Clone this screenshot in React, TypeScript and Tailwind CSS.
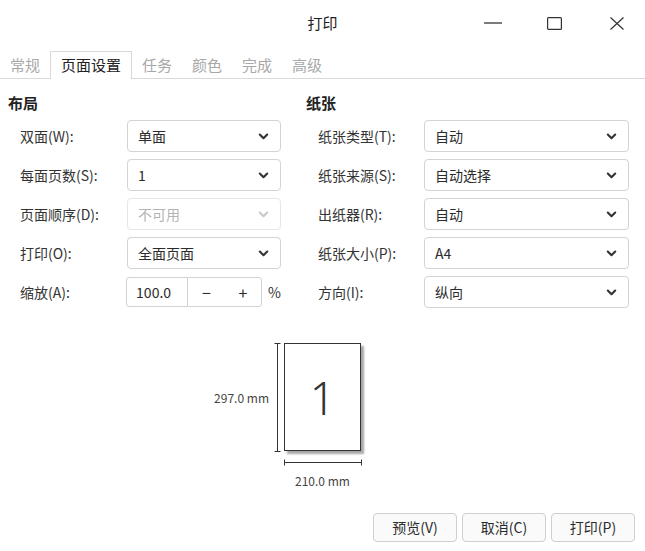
import { useState } from "react";

const FONT = { fontFamily: '"Noto Sans CJK SC", "Noto Sans", sans-serif' };

const TABS = ["常规", "页面设置", "任务", "颜色", "完成", "高级"];

interface FieldRow {
  label: string;
  value: string;
  disabled?: boolean;
}

const LAYOUT_ROWS: FieldRow[] = [
  { label: "双面(W):", value: "单面" },
  { label: "每面页数(S):", value: "1" },
  { label: "页面顺序(D):", value: "不可用", disabled: true },
  { label: "打印(O):", value: "全面页面" },
];

const PAPER_ROWS: FieldRow[] = [
  { label: "纸张类型(T):", value: "自动" },
  { label: "纸张来源(S):", value: "自动选择" },
  { label: "出纸器(R):", value: "自动" },
  { label: "纸张大小(P):", value: "A4" },
  { label: "方向(I):", value: "纵向" },
];

function Chevron({ muted }: { muted?: boolean }) {
  return (
    <svg width="11" height="7" viewBox="0 0 11 7" className="shrink-0">
      <path
        d="M1.8 1.5 L5.5 5.2 L9.2 1.5"
        fill="none"
        stroke={muted ? "#c8c8c8" : "#333"}
        strokeWidth="2.1"
        strokeLinecap="round"
        strokeLinejoin="round"
      />
    </svg>
  );
}

function Select({ value, disabled, width }: { value: string; disabled?: boolean; width: string }) {
  return (
    <div
      className={`${width} flex h-[32px] items-center justify-between rounded-[4px] border pl-[10px] pr-[11px] ${
        disabled ? "border-[#e6e6e6] text-[#b3b3b3]" : "border-[#d3d3d3] text-[#2b2b2b]"
      }`}
    >
      <span>{value}</span>
      <Chevron muted={disabled} />
    </div>
  );
}

function Row({ label, labelWidth, children }: { label: string; labelWidth: string; children: React.ReactNode }) {
  return (
    <div className="flex h-[32px] items-center pl-[12px]">
      <span className={`${labelWidth} text-[#333]`}>{label}</span>
      {children}
    </div>
  );
}

function ScaleSpin() {
  const [scale, setScale] = useState(100);
  return (
    <div className="flex items-center">
      <div className="flex h-[30px] w-[136px] rounded-[3px] border border-[#d3d3d3] text-[#2b2b2b]">
        <div className="flex w-[61px] items-center border-r border-[#d3d3d3] pl-[9px]">{scale.toFixed(1)}</div>
        <button className="flex flex-1 items-center justify-center text-[16px]" onClick={() => setScale((s) => s - 1)}>
          −
        </button>
        <button className="flex flex-1 items-center justify-center text-[16px]" onClick={() => setScale((s) => s + 1)}>
          +
        </button>
      </div>
      <span className="ml-[6px] text-[#333]">%</span>
    </div>
  );
}

function WindowControls() {
  return (
    <div className="flex items-center pr-[21px]">
      <svg width="18" height="2" viewBox="0 0 18 2">
        <path d="M0 1 H18" stroke="#333" strokeWidth="1.3" />
      </svg>
      <svg width="15" height="13" viewBox="0 0 15 13" className="ml-[45px]">
        <rect x="0.6" y="0.6" width="13.8" height="11.8" rx="1" fill="none" stroke="#333" strokeWidth="1.2" />
      </svg>
      <svg width="14" height="13" viewBox="0 0 14 13" className="ml-[48px]">
        <path d="M0.5 0.5 L13.5 12.5 M13.5 0.5 L0.5 12.5" stroke="#333" strokeWidth="1.2" />
      </svg>
    </div>
  );
}

function PagePreview() {
  return (
    <div className="mt-[35px] grid grid-cols-[1fr_77px_1fr] text-[12px] text-[#444]">
      <div className="flex items-center justify-end">
        <span className="mr-[5px]">297.0 mm</span>
        <svg width="7" height="109" viewBox="0 0 7 109" className="mr-[3px]">
          <path d="M3.5 0.5 V108.5 M0.5 0.5 H6.5 M0.5 108.5 H6.5" stroke="#333" strokeWidth="1" fill="none" />
        </svg>
      </div>
      <div className="flex h-[108px] w-[77px] items-center justify-center border border-[#333] bg-white shadow-[3px_3px_2px_rgba(0,0,0,0.35)]">
        <span className="font-['Noto_Sans',sans-serif] text-[45px] font-light leading-none text-[#333]">1</span>
      </div>
      <div />
      <div />
      <div className="flex flex-col items-center">
        <svg width="78" height="7" viewBox="0 0 78 7" className="mt-[7px]">
          <path d="M0.5 3.5 H77.5 M0.5 0.5 V6.5 M77.5 0.5 V6.5" stroke="#333" strokeWidth="1" fill="none" />
        </svg>
        <span className="mt-[6px] whitespace-nowrap">210.0 mm</span>
      </div>
      <div />
    </div>
  );
}

export default function App() {
  const active = 1;
  return (
    <div className="flex h-[551px] w-[645px] flex-col bg-white text-[14px]" style={FONT}>
      {/* title bar */}
      <div className="grid h-[51px] grid-cols-[1fr_auto_1fr] items-center">
        <div />
        <span className="pb-[4px] text-[15px] text-[#222]">打印</span>
        <div className="flex justify-end pb-[5px]">
          <WindowControls />
        </div>
      </div>

      {/* tabs */}
      <div className="flex h-[28px] items-stretch border-b border-[#d9d9d9] text-[15px]">
        {TABS.map((t, i) => (
          <div
            key={t}
            className={`-mb-px flex items-center px-[10px] ${
              i === active ? "border-x border-t border-[#d9d9d9] bg-white text-[#222]" : "text-[#a8a8a8]"
            }`}
          >
            {t}
          </div>
        ))}
      </div>

      {/* settings */}
      <div className="flex pl-[8px]">
        <div className="w-[273px]">
          <h2 className="pt-[13px] text-[15px] font-bold leading-[22px] text-[#222]">布局</h2>
          <div className="mt-[6px] flex flex-col gap-[7px]">
            {LAYOUT_ROWS.map((r) => (
              <Row key={r.label} label={r.label} labelWidth="w-[107px]">
                <Select value={r.value} disabled={r.disabled} width="w-[154px]" />
              </Row>
            ))}
            <Row label="缩放(A):" labelWidth="w-[107px]">
              <ScaleSpin />
            </Row>
          </div>
        </div>
        <div className="ml-[25px] w-[323px]">
          <h2 className="pt-[13px] text-[15px] font-bold leading-[22px] text-[#222]">纸张</h2>
          <div className="mt-[6px] flex flex-col gap-[7px]">
            {PAPER_ROWS.map((r) => (
              <Row key={r.label} label={r.label} labelWidth="w-[106px]">
                <Select value={r.value} width="w-[205px]" />
              </Row>
            ))}
          </div>
        </div>
      </div>

      <PagePreview />

      {/* dialog buttons */}
      <div className="mt-auto flex justify-end gap-[5px] pb-[9px] pr-[10px]">
        {["预览(V)", "取消(C)", "打印(P)"].map((b) => (
          <button
            key={b}
            className="h-[29px] w-[84px] rounded-[4px] border border-[#cfcfcf] bg-[#fafafa] text-[#2b2b2b]"
          >
            {b}
          </button>
        ))}
      </div>
    </div>
  );
}
